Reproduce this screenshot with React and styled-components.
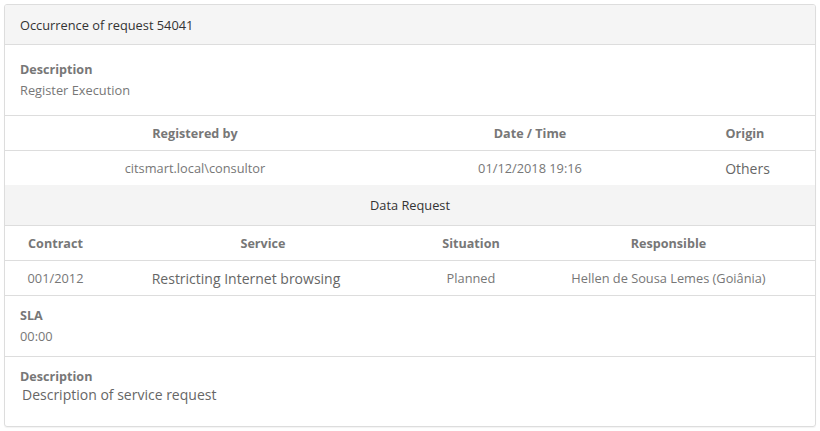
import React from 'react';
import styled, { createGlobalStyle } from 'styled-components';

const GlobalStyle = createGlobalStyle`
    body {
        margin: 0;
        background: #fff;
        font-family: "Open Sans", "Liberation Sans", sans-serif;
    }
`;

const Page = styled.div`
    padding: 4px 4px 3px;
`;

const Panel = styled.div`
    border: 1px solid #dddddd;
    border-radius: 3px;
    overflow: hidden;
    box-shadow: 0 1px 1px rgba(0, 0, 0, 0.05);
`;

const Heading = styled.div`
    height: 39px;
    display: flex;
    align-items: center;
    padding: 0 15px;
    background: #f5f5f5;
    border-bottom: 1px solid #dddddd;
    font-size: 12.8px;
    color: #333;
`;

const Section = styled.div`
    padding: ${(p) => p.$pad || '15px 15px 15px'};
    border-bottom: ${(p) => (p.$last ? 'none' : '1px solid #dddddd')};
`;

const Label = styled.div`
    font-size: 12.6px;
    line-height: 20px;
    font-weight: 700;
    color: #777;
`;

const Value = styled.div`
    font-size: ${(p) => (p.$big ? '14px' : '12.8px')};
    line-height: ${(p) => (p.$big ? '16px' : '20px')};
    color: ${(p) => (p.$big ? '#666' : '#777')};
    padding-left: ${(p) => (p.$indent ? '2px' : '0')};
    margin-bottom: ${(p) => (p.$big ? '23px' : '0')};
`;

const Row = styled.div`
    display: grid;
    grid-template-columns: ${(p) => p.$cols};
    height: 34px;
    border-bottom: ${(p) => (p.$noLine ? 'none' : '1px solid #dddddd')};
`;

const Cell = styled.div`
    display: flex;
    align-items: center;
    justify-content: center;
    font-size: ${(p) => (p.$big ? '14px' : p.$head ? '12.6px' : '12.8px')};
    font-weight: ${(p) => (p.$head ? 700 : 400)};
    color: ${(p) => (p.$big ? '#666' : '#777')};
    padding-right: ${(p) => p.$shiftLeft || 0};
    padding-left: ${(p) => p.$shiftRight || 0};
    white-space: nowrap;
`;

const Band = styled.div`
    height: 40px;
    display: flex;
    align-items: center;
    justify-content: center;
    background: #f4f4f4;
    border-bottom: 1px solid #dddddd;
    font-size: 12.8px;
    color: #333;
`;

const cols1 = '380px 290px 1fr';
const cols2 = '101px 314px 102px 1fr';

const App = () => {
    return (
        <Page>
            <GlobalStyle />
            <Panel>
                <Heading>Occurrence of request 54041</Heading>
                <Section>
                    <Label>Description</Label>
                    <Value>Register Execution</Value>
                </Section>

                <Row $cols={cols1}>
                    <Cell $head>Registered by</Cell>
                    <Cell $head>Date / Time</Cell>
                    <Cell $head>Origin</Cell>
                </Row>
                <Row $cols={cols1} $noLine>
                    <Cell>citsmart.local\consultor</Cell>
                    <Cell>01/12/2018 19:16</Cell>
                    <Cell $big $shiftRight="5px">Others</Cell>
                </Row>

                <Band>Data Request</Band>

                <Row $cols={cols2}>
                    <Cell $head>Contract</Cell>
                    <Cell $head>Service</Cell>
                    <Cell $head>Situation</Cell>
                    <Cell $head>Responsible</Cell>
                </Row>
                <Row $cols={cols2}>
                    <Cell>001/2012</Cell>
                    <Cell $big $shiftLeft="34px">Restricting Internet browsing</Cell>
                    <Cell>Planned</Cell>
                    <Cell>Hellen de Sousa Lemes (Goiânia)</Cell>
                </Row>

                <Section $pad="10px 15px">
                    <Label>SLA</Label>
                    <Value>00:00</Value>
                </Section>
                <Section $pad="10px 15px 0" $last>
                    <Label>Description</Label>
                    <Value $big $indent>Description of service request</Value>
                </Section>
            </Panel>
        </Page>
    );
};

export default App;
